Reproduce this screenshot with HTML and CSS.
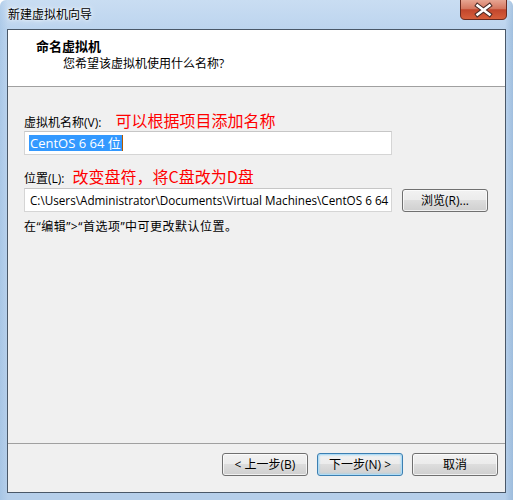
FILE: index.html
```html
<!DOCTYPE html>
<html lang="zh">
<head>
<meta charset="utf-8">
<title>新建虚拟机向导</title>
<link rel="stylesheet" href="styles.css">
</head>
<body>
<div class="window">
  <div class="titlebar">
    <span class="title">新建虚拟机向导</span>
    <button class="close" aria-label="关闭">
      <svg width="47" height="20" viewBox="0 0 47 20">
        <defs>
          <linearGradient id="rg" x1="0" y1="0" x2="0" y2="1">
            <stop offset="0" stop-color="#e7a592"/>
            <stop offset="0.45" stop-color="#d4765f"/>
            <stop offset="0.5" stop-color="#c2462c"/>
            <stop offset="1" stop-color="#d9603c"/>
          </linearGradient>
        </defs>
        <path d="M0.5 0 V15 Q0.5 19.5 5 19.5 H42 Q46.5 19.5 46.5 15 V0" fill="url(#rg)" stroke="#6a2a20"/>
        <path d="M17.5 5.5 L29.5 14.5 M29.5 5.5 L17.5 14.5" stroke="#4a2a26" stroke-width="4.6" stroke-linecap="square"/>
        <path d="M17.5 5.5 L29.5 14.5 M29.5 5.5 L17.5 14.5" stroke="#ffffff" stroke-width="2.6" stroke-linecap="square"/>
      </svg>
    </button>
  </div>
  <div class="client">
    <div class="header">
      <div class="h-title">命名虚拟机</div>
      <div class="h-sub">您希望该虚拟机使用什么名称?</div>
    </div>
    <div class="body">
      <div class="row">
        <span class="label">虚拟机名称(V):</span>
        <span class="note-red note-red-1">可以根据项目添加名称</span>
      </div>
      <div class="field field-name">
        <span class="sel">CentOS 6 64 位</span><span class="caret"></span>
      </div>
      <div class="row row-2">
        <span class="label">位置(L):</span>
        <span class="note-red note-red-2">改变盘符，将C盘改为D盘</span>
      </div>
      <div class="path-row">
        <div class="field field-path">C:\Users\Administrator\Documents\Virtual Machines\CentOS 6 64</div>
        <button class="btn btn-browse">浏览(R)...</button>
      </div>
      <div class="hint">在“编辑”&gt;“首选项”中可更改默认位置。</div>
    </div>
    <div class="footer">
      <button class="btn">&lt; 上一步(B)</button>
      <button class="btn btn-default">下一步(N) &gt;</button>
      <button class="btn">取消</button>
    </div>
  </div>
</div>
</body>
</html>
```

FILE: styles.css
```css
html, body {
  margin: 0;
  padding: 0;
  background: #ffffff;
}

body {
  font-family: "Open Sans", "Noto Sans CJK SC", sans-serif;
  font-size: 12px;
  color: #000;
}

.window {
  width: 513px;
  height: 500px;
  box-sizing: border-box;
  display: flex;
  flex-direction: column;
  padding: 0 7px 7px 7px;
  background:
    linear-gradient(90deg, rgba(140,180,220,0.35) 0, rgba(190,215,240,0) 8px, rgba(190,215,240,0) 505px, rgba(120,160,200,0.4) 513px),
    linear-gradient(180deg, #c9ddf2 0, #bcd4ee 30px, #b6cfea 100%);
  border-radius: 6px 6px 0 0;
}

.titlebar {
  height: 29px;
  flex: none;
  display: flex;
  align-items: flex-start;
  justify-content: space-between;
}

.title {
  margin-top: 6px;
  margin-left: 1px;
  font-family: "Noto Sans CJK SC", sans-serif;
  font-size: 12px;
  line-height: 16px;
  color: #000;
  text-shadow: 0 0 6px #fff, 0 0 3px #fff;
}

.close {
  margin: 0 -1px 0 0;
  padding: 0;
  border: 0;
  background: none;
  width: 47px;
  height: 20px;
  display: block;
}
.close svg { display: block; }

.client {
  flex: 1;
  display: flex;
  flex-direction: column;
  border: 1px solid #4a5868;
  background: #f0f0f0;
}

.header {
  height: 56px;
  flex: none;
  background: #ffffff;
  border-bottom: 1px solid #a0a0a0;
}

.h-title {
  margin: 8px 0 0 28px;
  font-family: "Noto Sans CJK SC", sans-serif;
  font-weight: bold;
  font-size: 13px;
  line-height: 16px;
}

.h-sub {
  margin: 2px 0 0 55px;
  line-height: 16px;
}

.body {
  flex: 1;
  padding: 23px 0 0 16px;
}

.row {
  display: flex;
  align-items: baseline;
  height: 21px;
  line-height: 21px;
}

.row-2 {
  margin-top: 11px;
}

.label {
  font-size: 12px;
}

.note-red {
  color: #ff0000;
  font-family: "Noto Sans CJK SC", sans-serif;
  font-size: 16px;
}
.note-red-1 {
  margin-left: 14px;
}
.note-red-2 {
  margin-left: 8px;
}

.field {
  box-sizing: border-box;
  width: 368px;
  height: 24px;
  background: #fff;
  border: 1px solid #d5d5d5;
  border-top-color: #c6c6c6;
  padding: 3px 0 0 4px;
  line-height: 16px;
  white-space: nowrap;
  overflow: hidden;
  display: flex;
  align-items: flex-start;
}

.sel {
  background: #3399ff;
  color: #fff;
  padding: 0 1px;
  font-size: 13px;
  line-height: 16px;
}

.caret {
  display: inline-block;
  width: 1px;
  height: 16px;
  background: #b35a00;
}

.path-row {
  display: flex;
  align-items: flex-start;
  margin-top: 1px;
}

.field-path {
  padding-left: 5px;
  font-size: 11.7px;
}

.btn {
  box-sizing: border-box;
  width: 86px;
  height: 23px;
  border: 1px solid #707070;
  border-radius: 3px;
  background: linear-gradient(180deg, #f2f2f2 0, #ebebeb 50%, #dddddd 50%, #cfcfcf 100%);
  box-shadow: inset 0 0 0 1px rgba(255,255,255,0.7);
  font-family: "Open Sans", "Noto Sans CJK SC", sans-serif;
  font-size: 12px;
  line-height: 19px;
  padding: 0;
  color: #000;
}

.btn-browse {
  margin: 1px 0 0 10px;
  width: 86px;
}

.hint {
  margin-top: 6px;
  line-height: 18px;
  letter-spacing: 0.5px;
}

.footer {
  flex: none;
  height: 39px;
  border-top: 1px solid #a0a0a0;
  display: flex;
  justify-content: flex-end;
  align-items: flex-start;
  gap: 9px;
  padding: 9px 7px 0 0;
}

.btn-default {
  border-color: #3c7fb1;
  box-shadow: inset 0 0 0 1px #b0dcf6, inset 0 0 2px 1px #8fd0f3;
}
```
